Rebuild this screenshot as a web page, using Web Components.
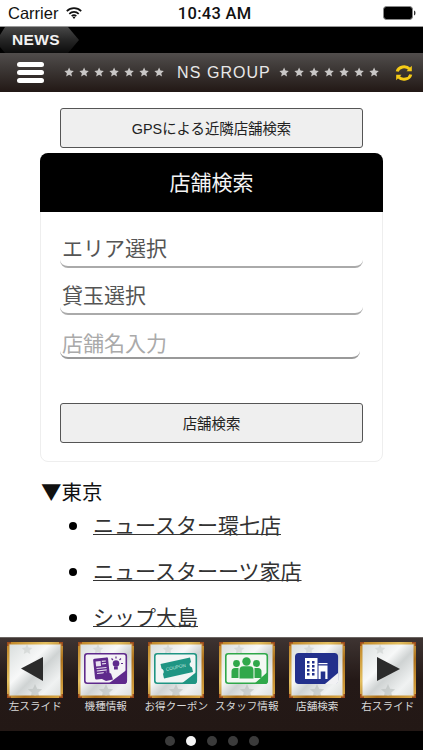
<!DOCTYPE html>
<html lang="ja">
<head>
<meta charset="utf-8">
<title>NS GROUP</title>
<style>
    html, body {
        margin: 0;
        height: 100%;
        overflow: hidden;
        background: #fff;
    }
    body {
        display: flex;
        flex-direction: column;
        height: 750px;
        font-family: "Liberation Sans", "Noto Sans CJK JP", sans-serif;
    }
</style>
</head>
<body>
<status-bar></status-bar>
<news-bar>NEWS</news-bar>
<app-header>NS GROUP</app-header>

<main-area>
    <ns-button>GPSによる近隣店舗検索</ns-button>
    <search-card heading="店舗検索">
        <search-field>エリア選択</search-field>
        <search-field>貸玉選択</search-field>
        <search-field placeholder>店舗名入力</search-field>
        <ns-button inset>店舗検索</ns-button>
    </search-card>
    <shop-list heading="▼東京">
        <shop-item>ニュースター環七店</shop-item>
        <shop-item>ニュースターーツ家店</shop-item>
        <shop-item>シップ大島</shop-item>
    </shop-list>
</main-area>

<tile-nav>
    <nav-tile label="左スライド">
        <svg viewBox="0 0 56 56"><path d="M14 26.5 36 15V39Z" fill="#2b2b2b"/></svg>
    </nav-tile>
    <nav-tile label="機種情報">
        <svg viewBox="0 0 56 56">
            <rect x="6.8" y="11.8" width="41.5" height="29.5" rx="2.5" fill="#f4f2f6" stroke="#5f2a8c" stroke-width="1.6"/>
            <path d="M48.5 28V39.5a2.5 2.5 0 0 1-2.5 2.5H30Z" fill="#5f2a8c"/>
            <rect x="16" y="16" width="15" height="21" rx="1.5" fill="#5f2a8c" transform="rotate(-6 23 26)"/>
            <rect x="18.3" y="19" width="5" height="5" fill="#e8e0ef" transform="rotate(-6 23 26)"/>
            <path d="M24.5 19.5h4M24.5 22h4M18.5 26h10M18.5 28.5h10M18.5 31h10" stroke="#e8e0ef" stroke-width="1.1" transform="rotate(-6 23 26)"/>
            <path d="M24 37 26 29.5 33 31.5 35 37.5 28 39Z" fill="#5f2a8c"/>
            <circle cx="38" cy="21.5" r="3.3" fill="#5f2a8c"/>
            <rect x="36" y="24.5" width="3.8" height="3" fill="#5f2a8c"/>
            <path d="M38 14.5v2M43 16.5l-1.5 1.5M45 21.5h-2M33.5 16.5 35 18" stroke="#5f2a8c" stroke-width="1.2"/>
        </svg>
    </nav-tile>
    <nav-tile label="お得クーポン">
        <svg viewBox="0 0 56 56">
            <rect x="6.8" y="11.8" width="41.5" height="29.5" rx="2.5" fill="#f2f6f5" stroke="#1f9583" stroke-width="1.6"/>
            <path d="M48.5 30V39.5a2.5 2.5 0 0 1-2.5 2.5H33Z" fill="#1f9583"/>
            <path d="M12.5 22 42 15.5 43 20a3 3 0 0 0 1 5.5L45 30 16 36.5 15 32a3.5 3.5 0 0 0-1.500-5.500Z" fill="#1f9583"/>
            <text x="28" y="26.8" font-size="4.6" fill="#bfe3dc" text-anchor="middle" font-family="Liberation Sans" transform="rotate(-12 28 26)">COUPON</text>
        </svg>
    </nav-tile>
    <nav-tile label="スタッフ情報">
        <svg viewBox="0 0 56 56">
            <rect x="6.8" y="11.8" width="41.5" height="29.5" rx="2.5" fill="#f3f8f3" stroke="#2fa84a" stroke-width="1.6"/>
            <path d="M48.5 30V39.5a2.5 2.5 0 0 1-2.5 2.5H35Z" fill="#2fa84a"/>
            <circle cx="17.5" cy="21.5" r="3.4" fill="#2fa84a"/>
            <circle cx="37.5" cy="21.5" r="3.4" fill="#2fa84a"/>
            <circle cx="27.5" cy="19.5" r="4.2" fill="#2fa84a"/>
            <path d="M12.5 36V29.5q0-3.5 3.5-3.5h3.5V36ZM42.5 36V29.5q0-3.5-3.500-3.500h-3.500V36Z" fill="#2fa84a"/>
            <path d="M20.5 36.5V28q0-3.8 3.8-3.8h6.4q3.8 0 3.8 3.8v8.5Z" fill="#2fa84a"/>
        </svg>
    </nav-tile>
    <nav-tile label="店舗検索">
        <svg viewBox="0 0 56 56">
            <rect x="6.8" y="11.8" width="41.5" height="29.5" rx="3" fill="#23308c" stroke="#23308c" stroke-width="1.6"/>
            <path d="M49 31V40a2 2 0 0 1-2 2H36Z" fill="#f2f2f4"/>
            <rect x="16" y="16" width="12.5" height="21" fill="#fff"/>
            <path d="M18 19h2.5v2.500H18ZM23 19h2.5v2.500H23ZM18 23h2.5v2.500H18ZM23 23h2.5v2.500H23ZM18 27h2.5v2.500H18ZM23 27h2.5v2.500H23ZM18 31h2.5v2.500H18ZM23 31h2.5v2.500H23Z" fill="#23308c"/>
            <path d="M29.5 23.5H38.5V37h-2.200V29.5h-4.600V37h-2.200Z" fill="#fff"/>
            <rect x="29.5" y="21" width="9" height="1.2" fill="#fff"/>
        </svg>
    </nav-tile>
    <nav-tile label="右スライド">
        <svg viewBox="0 0 56 56"><path d="M40 27 17 15V39Z" fill="#2b2b2b"/></svg>
    </nav-tile>
</tile-nav>
<page-dots count="5" active="1"></page-dots>

<script>
    function define(name, css, html) {
        customElements.define(name, class extends HTMLElement {
            constructor() {
                super()
                this.attachShadow({ mode: 'open' })
                const markup = typeof html === 'function' ? html(this) : html
                this.shadowRoot.innerHTML = `<style>${css}</style>${markup}`
            }
        })
    }

    define('status-bar', `
        :host {
            display: flex;
            align-items: center;
            height: 27px;
            flex: none;
            padding: 0 7px 0 8px;
            background: #fff;
            color: #111;
            font: 16.5px "Liberation Sans", sans-serif;
            border-bottom: 1px solid #999;
            box-sizing: border-box;
        }
        .wifi { width: 16px; height: 12px; margin-left: 8px; }
        .time {
            flex: 1;
            text-align: center;
            font: 500 16.5px Roboto, sans-serif;
            letter-spacing: 0.3px;
            padding-right: 36px;
        }
        svg.batt { width: 33px; height: 14px; display: block; }
    `, `
        <span>Carrier</span>
        <svg class="wifi" viewBox="0 0 16 12" fill="none" stroke="#111" stroke-width="1.7">
            <path d="M.8 4.2a10.2 10.2 0 0 1 14.4 0"/>
            <path d="M3.3 6.8a6.7 6.7 0 0 1 9.4 0"/>
            <path d="M5.7 9.2a3.3 3.3 0 0 1 4.6 0"/>
            <path d="M8 12 6.6 10.3a2 2 0 0 1 2.8 0Z" fill="#111" stroke="none"/>
        </svg>
        <span class="time">10:43 AM</span>
        <svg class="batt" viewBox="0 0 33 14">
            <rect x=".5" y=".5" width="29" height="13" rx="3" fill="#000" stroke="#888"/>
            <path d="M31 4.5q1.5.3 1.5 2.5T31 9.5Z" fill="#333"/>
        </svg>
    `)

    define('news-bar', `
        :host {
            display: block;
            height: 26px;
            flex: none;
            background: #000;
        }
        .tab {
            width: 79px;
            height: 26px;
            box-sizing: border-box;
            padding-left: 12px;
            display: flex;
            align-items: center;
            color: #f2f2f2;
            font: bold 15.5px "Liberation Sans", sans-serif;
            letter-spacing: 0.4px;
            background: linear-gradient(#474747, #262626 50%, #0c0c0c);
            clip-path: polygon(0 8px, 5px 0, 68px 0, 79px 13px, 68px 26px, 5px 26px, 0 20px);
        }
    `, `<div class="tab"><slot></slot></div>`)

    define('app-header', `
        :host {
            display: flex;
            align-items: center;
            height: 39px;
            flex: none;
            padding: 0 10px 0 17px;
            box-sizing: border-box;
            background: linear-gradient(#514d4c, #3d3836 40%, #221815);
            color: #e8e8e8;
        }
        .menu { display: flex; flex-direction: column; gap: 3px; width: 27px; flex: none; }
        .menu i { display: block; height: 5px; border-radius: 3px; background: #fff; }
        .title {
            display: flex;
            align-items: center;
            font: 16px "Liberation Sans", sans-serif;
            letter-spacing: 1.05px;
            white-space: nowrap;
            margin-left: 20px;
        }
        .name { margin: 0 8px 0 13px; }
        .stars { display: flex; gap: 4.8px; }
        .stars svg { width: 10.2px; height: 10.2px; display: block; }
        .sync { width: 18px; height: 18px; flex: none; margin-left: auto; }
    `, () => {
        const star = '<svg viewBox="0 0 20 20"><path d="M10 1l2.7 6.1 6.6.7-4.9 4.4 1.4 6.5L10 15.4l-5.800 3.300 1.400-6.500L.7 7.800l6.600-.7Z" fill="#c9c7c6"/></svg>'
        const stars = `<span class="stars">${star.repeat(7)}</span>`
        return `
            <div class="menu"><i></i><i></i><i></i></div>
            <div class="title">${stars}<span class="name"><slot></slot></span>${stars}</div>
            <svg class="sync" viewBox="0 0 18 18" fill="none" stroke="#f5cb17" stroke-width="3">
                <path d="M2.2 7.5A7 6 0 0 1 14.5 5"/>
                <path d="M11.5 7.2h5.3V1.8Z" fill="#f5cb17" stroke="none"/>
                <path d="M15.8 10.5A7 6 0 0 1 3.5 13"/>
                <path d="M6.5 10.8H1.2v5.4Z" fill="#f5cb17" stroke="none"/>
            </svg>
        `
    })

    define('main-area', `
        :host {
            display: block;
            flex: 1;
            min-height: 0;
            overflow: hidden;
            padding-top: 16px;
            background: #fff;
            color: #222;
            font-family: "Noto Sans CJK JP", sans-serif;
        }
    `, `<slot></slot>`)

    define('ns-button', `
        :host {
            display: flex;
            align-items: center;
            justify-content: center;
            box-sizing: border-box;
            height: 40px;
            margin: 0 60px;
            padding-bottom: 2px;
            background: #efefef;
            border: 1.5px solid #555;
            border-radius: 3px;
            font: 14.4px "Liberation Sans", "Noto Sans CJK JP", sans-serif;
            color: #222;
        }
        :host([inset]) { margin: 44px 19px 0; }
    `, `<slot></slot>`)

    define('search-card', `
        :host {
            display: block;
            margin: 5px 40px 0;
            box-sizing: border-box;
            height: 309px;
            border: 1px solid #eee;
            border-radius: 8px;
        }
        .head {
            height: 59px;
            box-sizing: border-box;
            padding-bottom: 3px;
            margin: -1px -1px 0;
            background: #000;
            color: #f4f4f4;
            border-radius: 8px 8px 0 0;
            display: flex;
            align-items: center;
            justify-content: center;
            font-size: 21px;
        }
        .body { padding-top: 19px; }
    `, host => `
        <div class="head">${host.getAttribute('heading')}</div>
        <div class="body"><slot></slot></div>
    `)

    define('search-field', `
        :host {
            display: flex;
            align-items: center;
            box-sizing: border-box;
            height: 37px;
            margin: 0 19px 10px;
            padding: 0 0 4px 2px;
            font-size: 21px;
            color: #555;
            border-bottom: 2px solid #aaa;
            border-radius: 0 0 8px 8px;
        }
        :host([placeholder]) {
            height: 29px;
            margin: 15px 22px 0 19px;
            color: #aaa;
            border-bottom-color: #999;
        }
    `, `<slot></slot>`)

    define('shop-list', `
        :host {
            display: block;
            margin: 18px 0 0 41px;
        }
        .head { font-size: 20.5px; line-height: 23px; color: #111; }
    `, host => `
        <div class="head">${host.getAttribute('heading')}</div>
        <slot></slot>
    `)

    define('shop-item', `
        :host {
            display: flex;
            align-items: center;
            height: 46px;
            font-size: 21px;
            color: #333;
        }
        .dot {
            width: 8px;
            height: 8px;
            border-radius: 50%;
            background: #000;
            margin: 0 16px 1px 28px;
            flex: none;
        }
        u {
            margin-bottom: 4px;
            text-underline-offset: 1px;
            text-decoration-thickness: 1px;
        }
    `, `<span class="dot"></span><u><slot></slot></u>`)

    define('tile-nav', `
        :host {
            display: grid;
            grid-template-columns: repeat(6, 1fr);
            height: 94px;
            flex: none;
            box-sizing: border-box;
            padding-top: 4px;
            border-top: 1px solid #6b6562;
            background: linear-gradient(#3e3432, #241917 45%, #231815);
        }
    `, `<slot></slot>`)

    define('nav-tile', `
        :host {
            display: flex;
            flex-direction: column;
            align-items: center;
            color: #d8d8d8;
            font: 10.6px/12px "Noto Sans CJK JP", sans-serif;
            white-space: nowrap;
        }
        .tile {
            display: grid;
            width: 56px;
            height: 56px;
            margin-bottom: 2px;
        }
        .frame { grid-area: 1 / 1; width: 56px; height: 56px; display: block; }
        ::slotted(svg) { grid-area: 1 / 1; width: 56px; height: 56px; display: block; }
    `, host => {
        const id = host.getAttribute('label').charCodeAt(0)
        return `
            <div class="tile">
                <svg class="frame" viewBox="0 0 56 56">
                    <defs>
                        <linearGradient id="s${id}" x1="0" y1="0" x2="1" y2="1">
                            <stop offset="0" stop-color="#d6dbda"/>
                            <stop offset=".4" stop-color="#f7f8f8"/>
                            <stop offset=".55" stop-color="#cfd3d3"/>
                            <stop offset=".78" stop-color="#f0f2f2"/>
                            <stop offset="1" stop-color="#d8dbda"/>
                        </linearGradient>
                        <linearGradient id="g${id}" x1="0" y1="0" x2="1" y2="1">
                            <stop offset="0" stop-color="#c08526"/>
                            <stop offset=".35" stop-color="#e3bf60"/>
                            <stop offset=".65" stop-color="#ad711c"/>
                            <stop offset="1" stop-color="#d9a845"/>
                        </linearGradient>
                    </defs>
                    <rect width="56" height="56" fill="url(#s${id})"/>
                    <path d="M28 42l2.1 4.7 5 .5-3.800 3.400 1.100 5-4.400-2.600-4.400 2.600 1.100-5-3.800-3.400 5-.5Z" fill="#b4b9b8" opacity=".55"/>
                    <path d="M20 2l1.600 3.500 3.700.4-2.800 2.500.8 3.700-3.300-1.900-3.300 1.900.8-3.700-2.800-2.500 3.700-.4Z" fill="#bcc0bf" opacity=".4"/>
                    <rect x="1.25" y="1.25" width="53.5" height="53.5" fill="none" stroke="url(#g${id})" stroke-width="2.5"/>
                    <path d="M0 0h4v1.500H1.500V4H0ZM56 0v4h-1.500V1.500H52V0ZM0 56v-4h1.500v2.500H4V56ZM56 56h-4v-1.500h2.500V52H56Z" fill="#9c4a1c"/>
                </svg>
                <slot></slot>
            </div>
            <span>${host.getAttribute('label')}</span>
        `
    })

    define('page-dots', `
        :host {
            display: flex;
            justify-content: center;
            align-items: center;
            gap: 11px;
            height: 19px;
            flex: none;
            background: #000;
        }
        i { width: 10px; height: 10px; border-radius: 50%; background: #3b3b3b; }
        i.on { background: #f5f5f5; }
    `, host => {
        const active = parseInt(host.getAttribute('active'))
        let out = ''
        for (let i = 0; i < parseInt(host.getAttribute('count')); i++) {
            out += `<i class="${i === active ? 'on' : ''}"></i>`
        }
        return out
    })
</script>
</body>
</html>
